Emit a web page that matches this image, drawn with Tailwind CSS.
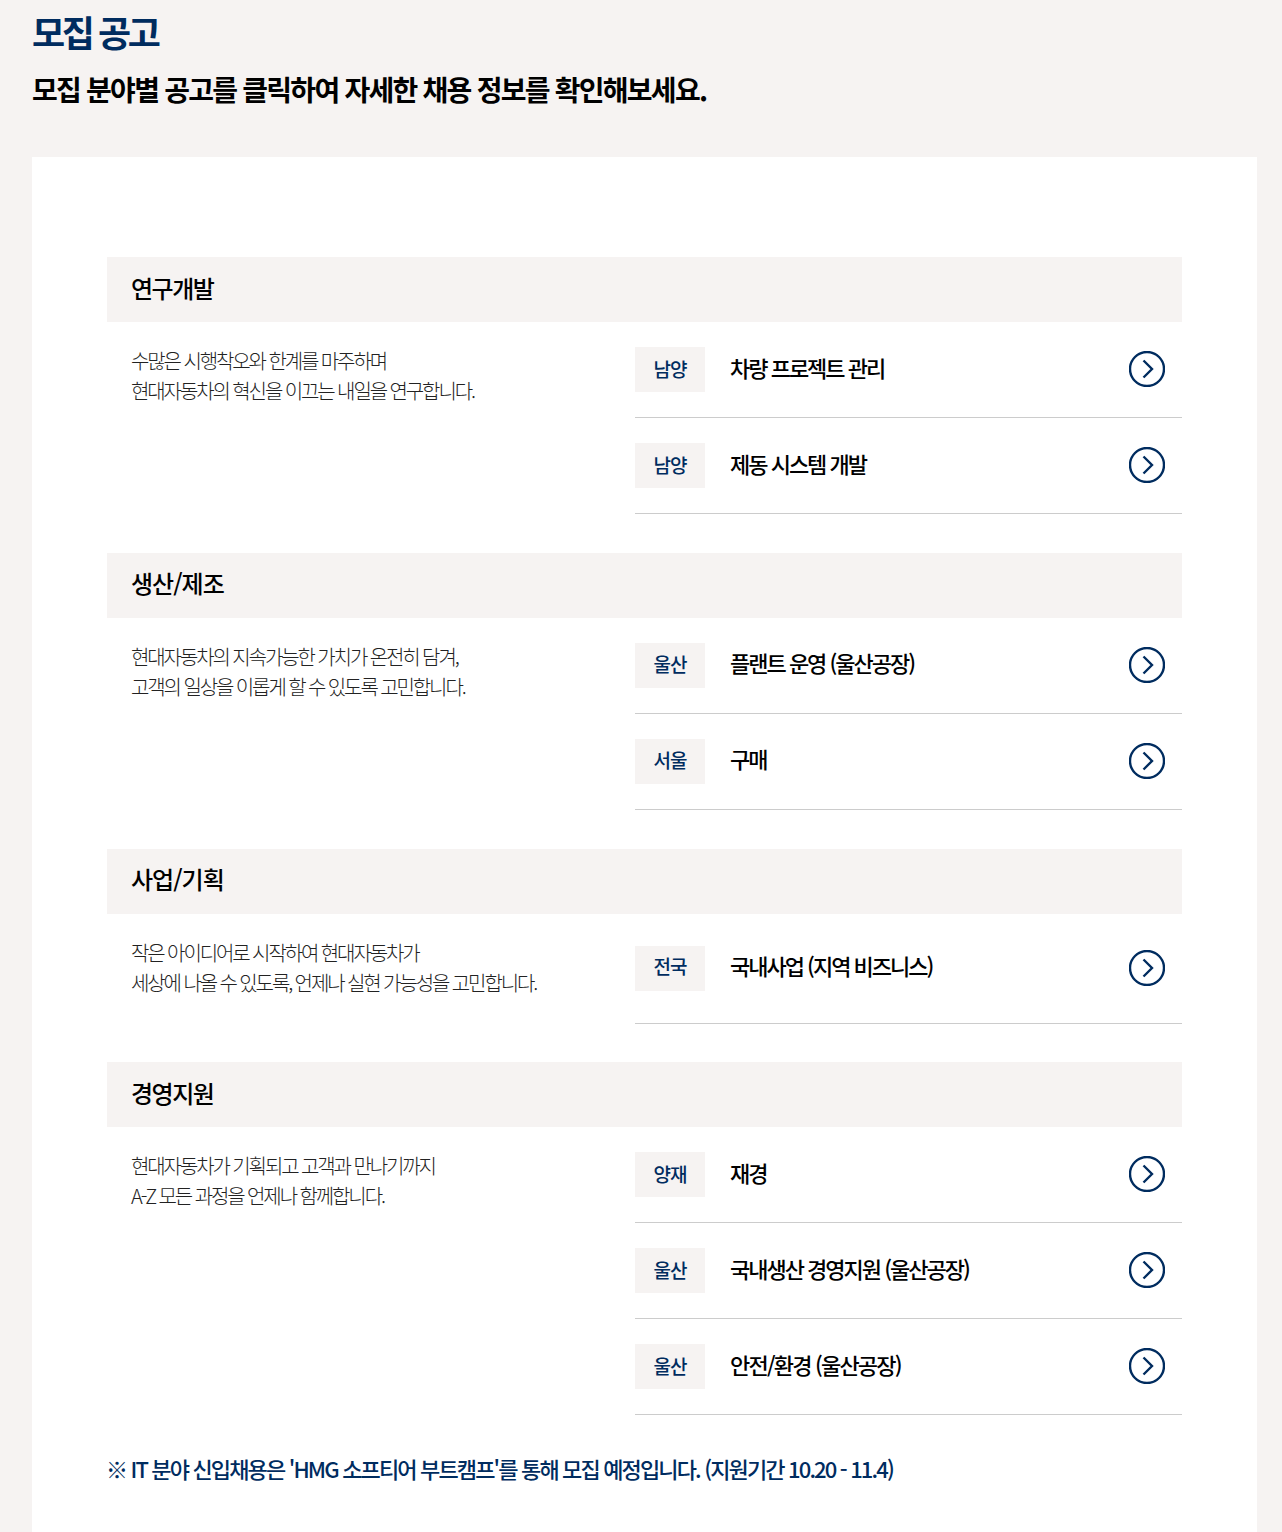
<!DOCTYPE html>
<html lang="ko">
<head>
  <meta charset="UTF-8" />
  <title>모집 공고</title>
  <script src="https://cdn.jsdelivr.net/npm/@tailwindcss/browser@4"></script>
</head>
<body class="bg-[#f6f3f2] font-['Noto_Sans_CJK_KR','Noto_Sans',sans-serif] h-[1532px] overflow-hidden">
  <div class="pl-8 pr-[25px]">
    <h1 class="h-[63px] pt-[7px] text-[36px] leading-[48px] font-bold tracking-[-3.4px] text-[#002c5f]">모집 공고</h1>
    <p class="h-[94px] pt-[7px] text-[28px] leading-[38px] font-bold tracking-[-1.75px] text-black">모집 분야별 공고를 클릭하여 자세한 채용 정보를 확인해보세요.</p>

    <div class="bg-white px-[75px] pt-[100px] h-[1400px]">
      <!-- 연구개발 -->
      <section class="mb-[39px]">
        <h2 class="h-[65px] bg-[#f6f3f2] pl-[24px] text-[24px] leading-[61px] font-medium tracking-[-1.5px] text-black">연구개발</h2>
        <div class="flex">
          <p class="w-[528px] pl-[24px] pt-[24px] text-[20px] leading-[30px] font-light tracking-[-2.1px] text-[#222]">수많은 시행착오와 한계를 마주하며<br />현대자동차의 혁신을 이끄는 내일을 연구합니다.</p>
          <ul class="flex-1">
            <li class="flex items-center h-[96px] border-b border-[#ccc] pb-px">
              <span class="w-[70px] h-[45px] bg-[#f6f3f2] text-center text-[19px] leading-[43px] font-medium tracking-[-1px] text-[#002c5f]">남양</span>
              <span class="flex-1 pl-[25px] pb-[4px] text-[22px] font-medium tracking-[-2px] text-black">차량 프로젝트 관리</span>
              <svg class="mr-[17px]" width="36" height="36" viewBox="0 0 36 36" fill="none" stroke="#002c5f" stroke-width="2.4"><circle cx="18" cy="18" r="17" /><path d="M14.5 9.5L23 18L14.5 26.5" /></svg>
            </li>
            <li class="flex items-center h-[96px] border-b border-[#ccc] pb-px">
              <span class="w-[70px] h-[45px] bg-[#f6f3f2] text-center text-[19px] leading-[43px] font-medium tracking-[-1px] text-[#002c5f]">남양</span>
              <span class="flex-1 pl-[25px] pb-[4px] text-[22px] font-medium tracking-[-2px] text-black">제동 시스템 개발</span>
              <svg class="mr-[17px]" width="36" height="36" viewBox="0 0 36 36" fill="none" stroke="#002c5f" stroke-width="2.4"><circle cx="18" cy="18" r="17" /><path d="M14.5 9.5L23 18L14.5 26.5" /></svg>
            </li>
          </ul>
        </div>
      </section>

      <!-- 생산/제조 -->
      <section class="mb-[39px]">
        <h2 class="h-[65px] bg-[#f6f3f2] pl-[24px] text-[24px] leading-[60px] font-medium tracking-[-1px] text-black">생산/제조</h2>
        <div class="flex">
          <p class="w-[528px] pl-[24px] pt-[24px] text-[20px] leading-[30px] font-light tracking-[-2.1px] text-[#222]">현대자동차의 지속가능한 가치가 온전히 담겨,<br />고객의 일상을 이롭게 할 수 있도록 고민합니다.</p>
          <ul class="flex-1">
            <li class="flex items-center h-[96px] border-b border-[#ccc] pb-px">
              <span class="w-[70px] h-[45px] bg-[#f6f3f2] text-center text-[19px] leading-[41px] font-medium tracking-[-1px] text-[#002c5f]">울산</span>
              <span class="flex-1 pl-[25px] pb-[6px] text-[22px] font-medium tracking-[-2px] text-black">플랜트 운영 (울산공장)</span>
              <svg class="mr-[17px]" width="36" height="36" viewBox="0 0 36 36" fill="none" stroke="#002c5f" stroke-width="2.4"><circle cx="18" cy="18" r="17" /><path d="M14.5 9.5L23 18L14.5 26.5" /></svg>
            </li>
            <li class="flex items-center h-[96px] border-b border-[#ccc] pb-px">
              <span class="w-[70px] h-[45px] bg-[#f6f3f2] text-center text-[19px] leading-[41px] font-medium tracking-[-1px] text-[#002c5f]">서울</span>
              <span class="flex-1 pl-[25px] pb-[6px] text-[22px] font-medium tracking-[-2px] text-black">구매</span>
              <svg class="mr-[17px]" width="36" height="36" viewBox="0 0 36 36" fill="none" stroke="#002c5f" stroke-width="2.4"><circle cx="18" cy="18" r="17" /><path d="M14.5 9.5L23 18L14.5 26.5" /></svg>
            </li>
          </ul>
        </div>
      </section>

      <!-- 사업/기획 -->
      <section class="mb-[38px]">
        <h2 class="h-[65px] bg-[#f6f3f2] pl-[24px] text-[24px] leading-[60px] font-medium tracking-[-1px] text-black">사업/기획</h2>
        <div class="flex">
          <p class="w-[528px] pl-[24px] pt-[24px] text-[20px] leading-[30px] font-light tracking-[-2.1px] text-[#222]">작은 아이디어로 시작하여 현대자동차가<br />세상에 나올 수 있도록, 언제나 실현 가능성을 고민합니다.</p>
          <ul class="flex-1">
            <li class="flex items-center h-[110px] border-b border-[#ccc] pb-px">
              <span class="w-[70px] h-[45px] bg-[#f6f3f2] text-center text-[19px] leading-[40px] font-medium tracking-[-1px] text-[#002c5f]">전국</span>
              <span class="flex-1 pl-[25px] pb-[5px] text-[22px] font-medium tracking-[-2px] text-black">국내사업 (지역 비즈니스)</span>
              <svg class="mr-[17px] mb-px" width="36" height="36" viewBox="0 0 36 36" fill="none" stroke="#002c5f" stroke-width="2.4"><circle cx="18" cy="18" r="17" /><path d="M14.5 9.5L23 18L14.5 26.5" /></svg>
            </li>
          </ul>
        </div>
      </section>

      <!-- 경영지원 -->
      <section>
        <h2 class="h-[65px] bg-[#f6f3f2] pl-[24px] text-[24px] leading-[61px] font-medium tracking-[-1.5px] text-black">경영지원</h2>
        <div class="flex">
          <p class="w-[528px] pl-[24px] pt-[24px] text-[20px] leading-[30px] font-light tracking-[-2.1px] text-[#222]">현대자동차가 기획되고 고객과 만나기까지<br />A-Z 모든 과정을 언제나 함께합니다.</p>
          <ul class="flex-1">
            <li class="flex items-center h-[96px] border-b border-[#ccc] pb-px">
              <span class="w-[70px] h-[45px] bg-[#f6f3f2] text-center text-[19px] leading-[43px] font-medium tracking-[-1px] text-[#002c5f]">양재</span>
              <span class="flex-1 pl-[25px] pb-[4px] text-[22px] font-medium tracking-[-2px] text-black">재경</span>
              <svg class="mr-[17px]" width="36" height="36" viewBox="0 0 36 36" fill="none" stroke="#002c5f" stroke-width="2.4"><circle cx="18" cy="18" r="17" /><path d="M14.5 9.5L23 18L14.5 26.5" /></svg>
            </li>
            <li class="flex items-center h-[96px] border-b border-[#ccc] pb-px">
              <span class="w-[70px] h-[45px] bg-[#f6f3f2] text-center text-[19px] leading-[43px] font-medium tracking-[-1px] text-[#002c5f]">울산</span>
              <span class="flex-1 pl-[25px] pb-[4px] text-[22px] font-medium tracking-[-2px] text-black">국내생산 경영지원 (울산공장)</span>
              <svg class="mr-[17px]" width="36" height="36" viewBox="0 0 36 36" fill="none" stroke="#002c5f" stroke-width="2.4"><circle cx="18" cy="18" r="17" /><path d="M14.5 9.5L23 18L14.5 26.5" /></svg>
            </li>
            <li class="flex items-center h-[96px] border-b border-[#ccc] pb-px">
              <span class="w-[70px] h-[45px] bg-[#f6f3f2] text-center text-[19px] leading-[43px] font-medium tracking-[-1px] text-[#002c5f]">울산</span>
              <span class="flex-1 pl-[25px] pb-[4px] text-[22px] font-medium tracking-[-1.8px] text-black">안전/환경 (울산공장)</span>
              <svg class="mr-[17px]" width="36" height="36" viewBox="0 0 36 36" fill="none" stroke="#002c5f" stroke-width="2.4"><circle cx="18" cy="18" r="17" /><path d="M14.5 9.5L23 18L14.5 26.5" /></svg>
            </li>
          </ul>
        </div>
      </section>

      <p class="pt-[37px] -ml-px text-[22px] leading-[32px] font-medium tracking-[-1.85px] text-[#002c5f]">※ IT 분야 신입채용은 'HMG 소프티어 부트캠프'를 통해 모집 예정입니다. (지원기간 10.20 - 11.4)</p>
    </div>
  </div>
</body>
</html>
